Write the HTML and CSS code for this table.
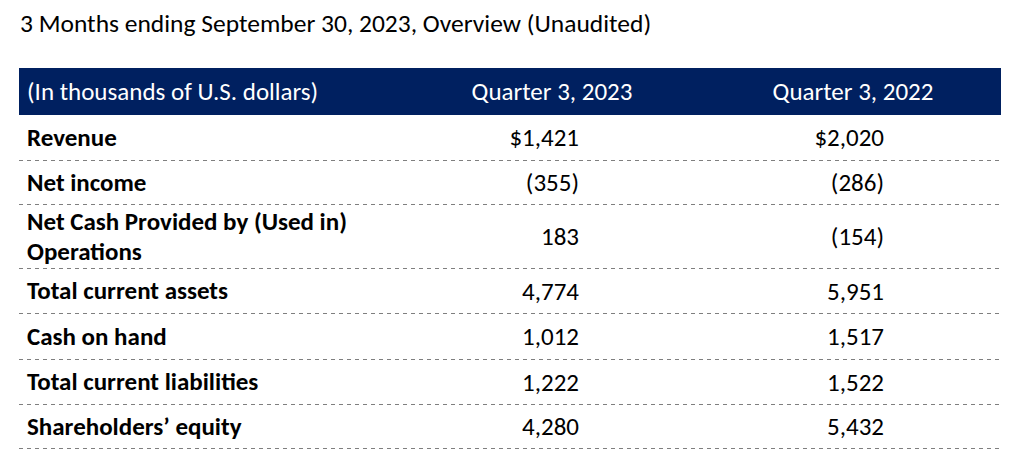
FILE: index.html
```html
<!DOCTYPE html>
<html lang="en">
<head>
<meta charset="utf-8">
<title>3 Months ending September 30, 2023, Overview</title>
<link rel="stylesheet" href="styles.css">
</head>
<body>
<div class="page">
  <h1 class="title">3 Months ending September 30, 2023, Overview (Unaudited)</h1>
  <div class="table">
    <div class="row head">
      <div class="label">(In thousands of U.S. dollars)</div>
      <div class="col">Quarter 3, 2023</div>
      <div class="col">Quarter 3, 2022</div>
    </div>
    <div class="row h46">
      <div class="label">Revenue</div>
      <div class="val v1">$1,421</div>
      <div class="val v2">$2,020</div>
    </div>
    <div class="row h44">
      <div class="label">Net income</div>
      <div class="val v1">(355)</div>
      <div class="val v2">(286)</div>
    </div>
    <div class="row h64">
      <div class="label">Net Cash Provided by (Used in)<br>Operations</div>
      <div class="val v1">183</div>
      <div class="val v2">(154)</div>
    </div>
    <div class="row h45">
      <div class="label">Total current assets</div>
      <div class="val v1">4,774</div>
      <div class="val v2">5,951</div>
    </div>
    <div class="row h46">
      <div class="label">Cash on hand</div>
      <div class="val v1">1,012</div>
      <div class="val v2">1,517</div>
    </div>
    <div class="row h45">
      <div class="label">Total current liabilities</div>
      <div class="val v1">1,222</div>
      <div class="val v2">1,522</div>
    </div>
    <div class="row h44">
      <div class="label">Shareholders’ equity</div>
      <div class="val v1">4,280</div>
      <div class="val v2">5,432</div>
    </div>
  </div>
</div>
</body>
</html>
```
FILE: styles.css
```css
* { box-sizing: border-box; }

html, body {
  margin: 0;
  padding: 0;
  background: #ffffff;
}

body {
  font-family: "Carlito", "Lato", "Liberation Sans", sans-serif;
  color: #000000;
}

.page {
  padding: 8px 0 0 19px;
  width: 1002px;
}

.title {
  margin: 0 0 0 1px;
  font-size: 25.5px;
  font-weight: 400;
  line-height: 32px;
  height: 60px;
}

.table {
  display: flex;
  flex-direction: column;
  width: 982px;
}

.row {
  display: grid;
  grid-template-columns: 380px 306px 296px;
  align-items: center;
  font-size: 25px;
  background-image: repeating-linear-gradient(to right, #7f7f7f 0 4px, transparent 4px 8px);
  background-size: 100% 1px;
  background-position: left bottom;
  background-repeat: no-repeat;
  padding-bottom: 1px;
}

.row.head {
  height: 47px;
  background: #002060;
  color: #ffffff;
  padding-bottom: 0;
}

.h44 { height: 44px; }
.h45 { height: 45px; }
.h46 { height: 46px; }
.h64 { height: 64px; }

.label {
  padding-left: 8px;
  font-weight: 700;
  line-height: 30px;
}

.head .label { font-weight: 400; }

.col {
  text-align: center;
}

.val {
  text-align: right;
}

.v1 { padding-right: 126px; }
.v2 { padding-right: 117px; }
```
